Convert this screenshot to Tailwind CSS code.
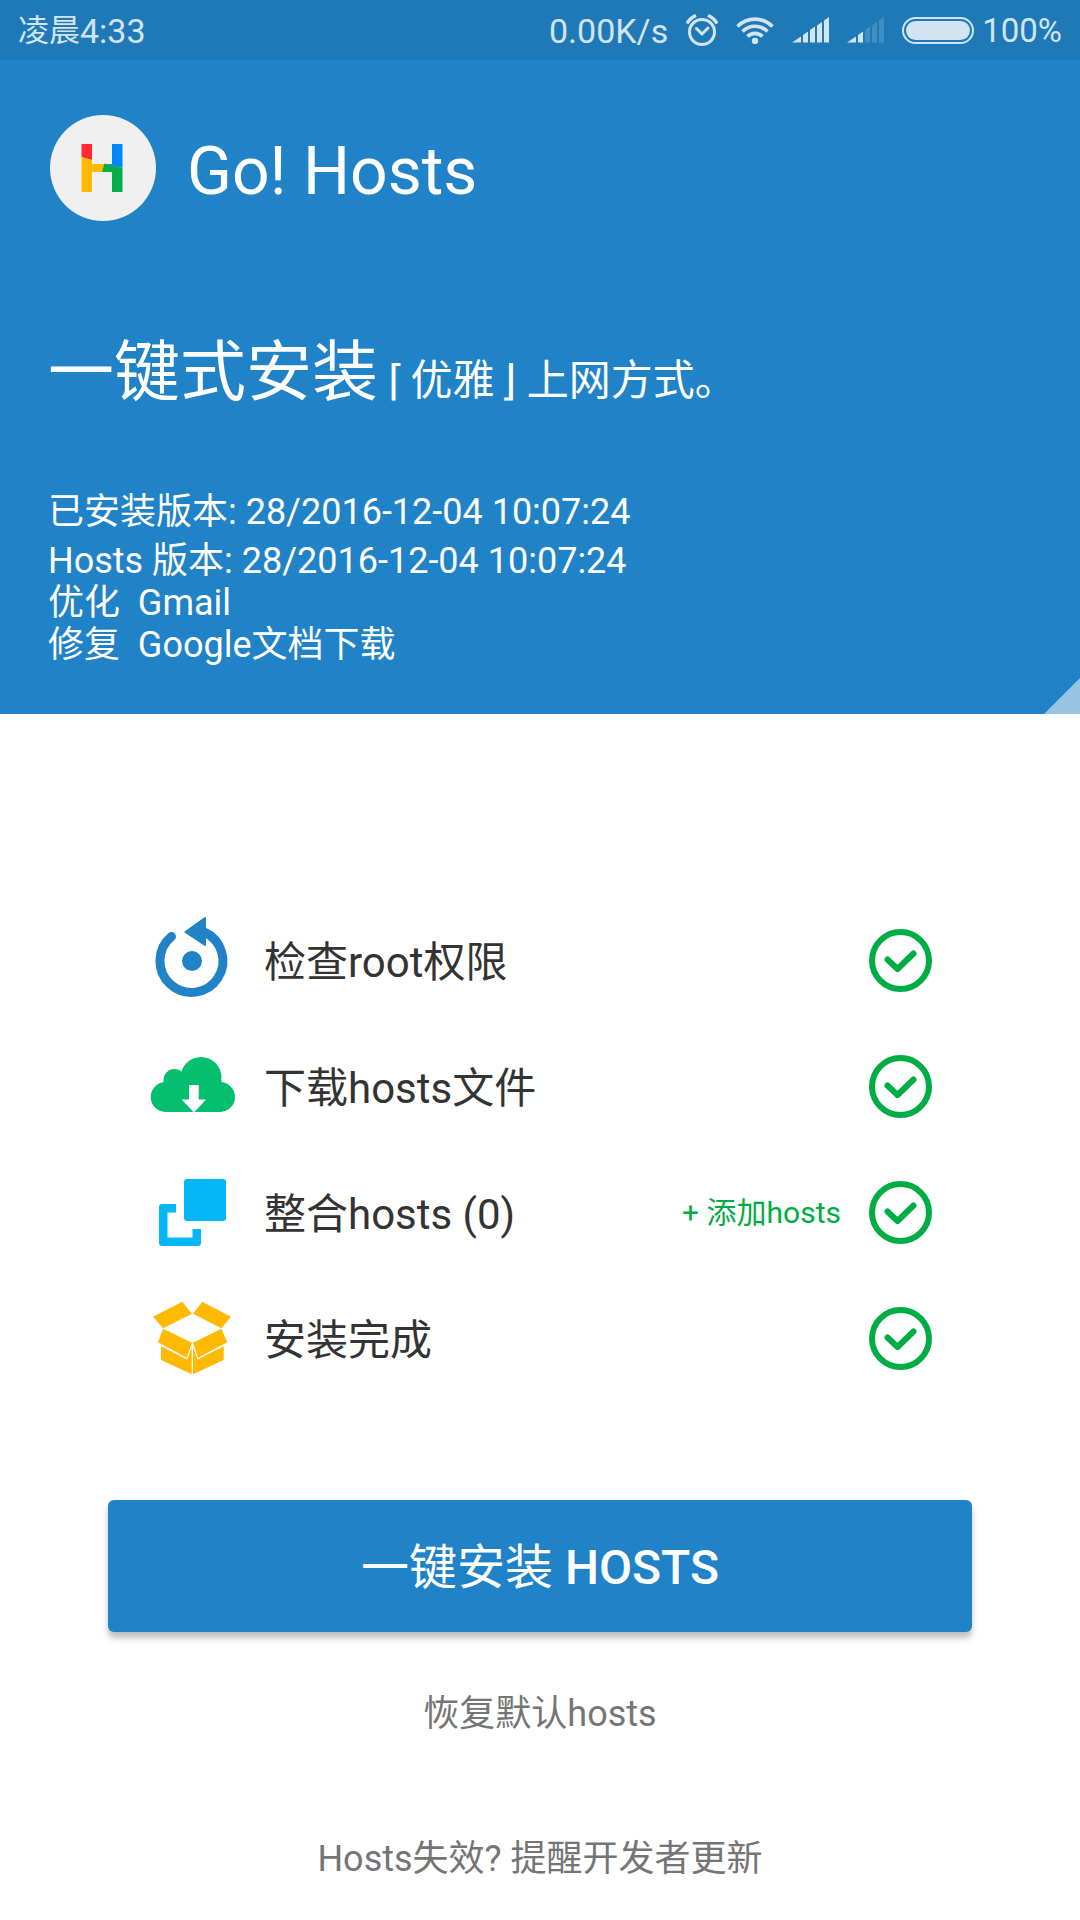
<!DOCTYPE html>
<html lang="zh-CN">
<head>
    <meta charset="UTF-8">
    <meta name="viewport" content="width=device-width, initial-scale=1.0">
    <title>Go! Hosts</title>
    <script src="https://cdn.jsdelivr.net/npm/@tailwindcss/browser@4"></script>
</head>
<body class="min-h-screen bg-white font-[Roboto,'Noto_Sans_CJK_SC',sans-serif] text-[#333333]">

    <!-- 状态栏 -->
    <div class="flex h-[60px] items-center justify-between bg-[#1e79b6] px-[18px] text-[34px] leading-[40px] text-[#d2e4f1]">
        <div class="flex items-center pt-0.5"><span class="text-[31px]">凌晨</span><span>4:33</span></div>
        <div class="flex items-center gap-[18px]">
            <span class="pt-0.5">0.00K/s</span>
            <!-- 闹钟 -->
            <svg class="h-8 w-8" viewBox="0 0 32 32" fill="none" stroke="currentColor" stroke-width="3">
                <circle cx="16" cy="18" r="12.5" />
                <path d="M10.5 14.5l5.500 5.500 6-6" stroke-linecap="round" />
                <path d="M1 9.500q3-5.500 9-8M31 9.500q-3-5.500-9-8" stroke-width="3.500" />
            </svg>
            <!-- WiFi -->
            <svg class="h-7 w-[38px]" viewBox="0 0 38 28" fill="none" stroke="currentColor" stroke-width="3.600">
                <path d="M1.500 10.500a24.500 24.500 0 0 1 35 0M6.500 15.500a17.500 17.500 0 0 1 25 0M11.500 20.500a10.500 10.500 0 0 1 15 0" />
                <circle cx="19" cy="25" r="3.200" fill="currentColor" stroke="none" />
            </svg>
            <!-- 信号 -->
            <svg class="h-[26px] w-[37px]" viewBox="0 0 37 26" fill="currentColor">
                <path d="M0 25.500L9 19.500V25.500ZM11 18l5-3.500v11h-5ZM18 13l5-3.500v16h-5ZM25 8.500l5-3.500v20.500h-5ZM32 3.500l5-3.500v25.500h-5Z" />
            </svg>
            <svg class="h-[26px] w-[37px]" viewBox="0 0 37 26" fill="currentColor">
                <path d="M0 25.500L9 19.500V25.500ZM11 18l5-3.500v11h-5Z" />
                <path d="M18 13l5-3.500v16h-5ZM25 8.500l5-3.500v20.500h-5ZM32 3.500l5-3.500v25.500h-5Z" opacity=".2" />
            </svg>
            <!-- 电池 -->
            <div class="flex items-center gap-2">
                <div class="h-[27px] w-[72px] rounded-full border-2 border-current p-0.5">
                    <div class="h-full rounded-full bg-current"></div>
                </div>
                <span class="pt-0.5 text-[33px]">100%</span>
            </div>
        </div>
    </div>

    <!-- 头部 -->
    <header class="relative bg-[#2082c7] px-12 pt-[55px] pb-12 text-white">
        <div class="flex items-center gap-[31px] pl-0.5">
            <svg class="size-[106px]" viewBox="0 0 106 106">
                <circle cx="53" cy="53" r="53" fill="#f0f0f0" />
                <path fill="#ff2a2e" d="M31.500 29h10.500v16l-10.500-3Z" />
                <path fill="#ffb900" d="M31.500 42l10.500 3v4h13l-3 8H42v20H31.500Z" />
                <path fill="#0087ff" d="M62 29h10.500v24L55 49h7Z" />
                <path fill="#00ad48" d="M54.500 48.500l18 4.500v24H62V57H52Z" />
            </svg>
            <h1 class="pt-2 text-[66px] leading-[80px]">Go! Hosts</h1>
        </div>

        <p class="mt-[103px] text-[42px] leading-[98px]"><span class="text-[66px]">一键式安装</span> <span class="mr-1.5">⌈</span>优雅<span class="ml-1.5">⌋</span> 上网方式。</p>

        <div class="mt-[61px] text-[36px] leading-[42px]">
            <p class="mb-[7px]">已安装版本: 28/2016-12-04 10:07:24</p>
            <p>Hosts 版本: 28/2016-12-04 10:07:24</p>
            <p>优化&nbsp; Gmail</p>
            <p>修复&nbsp; Google文档下载</p>
        </div>

        <!-- 右下角折角 -->
        <svg class="absolute right-0 bottom-0 size-9" viewBox="0 0 36 36"><path d="M0 36L36 0V36Z" fill="#98c4e4" /></svg>
    </header>

    <main>
        <!-- 安装步骤 -->
        <ul class="mt-[183px] pr-[148px] pl-36 text-[42px]">
            <li class="flex h-[126px] items-center">
                <svg class="size-24" viewBox="0 0 96 96" fill="#2082c7">
                    <path d="M27.500 24.500A31.500 31.500 0 1 0 60 20" fill="none" stroke="#2082c7" stroke-width="9" stroke-linecap="round" />
                    <path d="M41.500 20L61 6V33Z" stroke="#2082c7" stroke-width="2" stroke-linejoin="round" />
                    <circle cx="48" cy="49" r="10" />
                </svg>
                <span class="ml-6 flex-1 pt-1">检查root权限</span>
                <svg class="size-[63px]" viewBox="0 0 63 63" fill="none" stroke="#00ad45" stroke-width="6">
                    <circle cx="31.500" cy="31.500" r="28.500" />
                    <path d="M18.500 30.500l10 9.500 16-15.500" stroke-linecap="round" stroke-linejoin="round" />
                </svg>
            </li>
            <li class="flex h-[126px] items-center">
                <svg class="size-24" viewBox="0 0 96 96" fill="#04bf6e">
                    <circle cx="57" cy="39.500" r="20.500" />
                    <circle cx="30.500" cy="42" r="11" />
                    <circle cx="21.700" cy="59" r="15" />
                    <circle cx="76" cy="59" r="15" />
                    <path d="M20 42H77.500V74H20Z" />
                    <path fill="#fff" d="M45 47H54.700V61.500H62L50 74.500 37.700 61.500H45Z" />
                </svg>
                <span class="ml-6 flex-1 pt-1">下载hosts文件</span>
                <svg class="size-[63px]" viewBox="0 0 63 63" fill="none" stroke="#00ad45" stroke-width="6">
                    <circle cx="31.500" cy="31.500" r="28.500" />
                    <path d="M18.500 30.500l10 9.500 16-15.500" stroke-linecap="round" stroke-linejoin="round" />
                </svg>
            </li>
            <li class="flex h-[126px] items-center">
                <svg class="size-24" viewBox="0 0 96 96" fill="#05b7f6">
                    <rect x="40" y="15" width="42" height="42" rx="3" />
                    <path d="M32 40V48.500H23.500V73.500H48.500V65H57V79a3 3 0 0 1-3 3H18a3 3 0 0 1-3-3V43a3 3 0 0 1 3-3Z" />
                </svg>
                <span class="ml-6 flex-1 pt-1">整合hosts (0)</span>
                <button class="mr-7 cursor-pointer text-[30px] text-[#00ad45]" type="button">+ 添加hosts</button>
                <svg class="size-[63px]" viewBox="0 0 63 63" fill="none" stroke="#00ad45" stroke-width="6">
                    <circle cx="31.500" cy="31.500" r="28.500" />
                    <path d="M18.500 30.500l10 9.500 16-15.500" stroke-linecap="round" stroke-linejoin="round" />
                </svg>
            </li>
            <li class="flex h-[126px] items-center">
                <svg class="size-24" viewBox="0 0 96 96" fill="#ffb900">
                    <path d="M9 26.700L38.300 11.700 48 23.700 19 38.300Z" />
                    <path d="M87 26.700L58.300 11.700 49 23.700 77.300 38.300Z" />
                    <path d="M19 38.700L48 52.700 42.700 67.700 14 52.300Z" />
                    <path d="M77.300 38.700L49 52.700 54 67.700 83.300 52.300Z" />
                    <path d="M17 56.300L43.300 69.500 47.700 57.300V84.300L17 70Z" />
                    <path d="M79.700 56.300L53.500 69.500 49 57.300V84.300L79.700 70Z" />
                </svg>
                <span class="ml-6 flex-1 pt-1">安装完成</span>
                <svg class="size-[63px]" viewBox="0 0 63 63" fill="none" stroke="#00ad45" stroke-width="6">
                    <circle cx="31.500" cy="31.500" r="28.500" />
                    <path d="M18.500 30.500l10 9.500 16-15.500" stroke-linecap="round" stroke-linejoin="round" />
                </svg>
            </li>
        </ul>

        <!-- 操作按钮 -->
        <div class="mt-[99px] px-[10%]">
            <button class="h-[132px] w-full cursor-pointer rounded-md bg-[#2082c7] pt-1 text-[48px] text-white shadow-[0_6px_6px_rgba(0,0,0,0.25)]" type="button">一键安装 <span class="font-medium">HOSTS</span></button>
        </div>
        <div class="mt-[58px] flex flex-col items-center gap-[97px] text-[36px] leading-[48px] text-[#757575]">
            <button class="cursor-pointer" type="button">恢复默认hosts</button>
            <a class="block" href="#">Hosts失效? 提醒开发者更新</a>
        </div>
    </main>

</body>
</html>
